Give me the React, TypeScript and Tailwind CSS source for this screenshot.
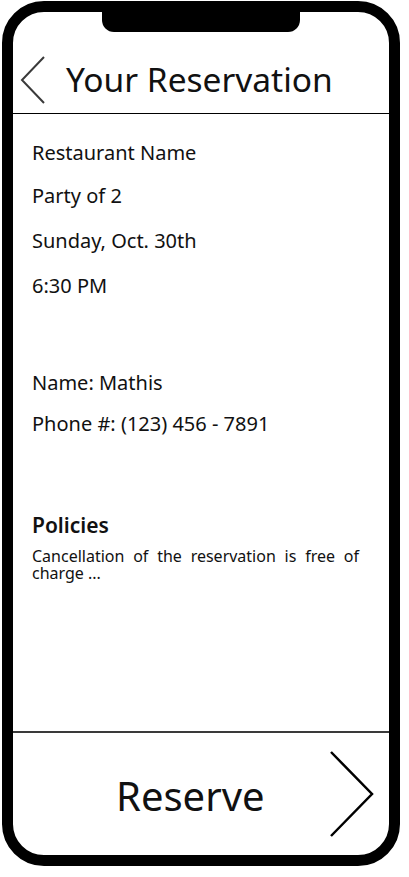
import React from 'react';

const font = { fontFamily: '"Noto Sans", "Open Sans", sans-serif' };

function BackChevron() {
  return (
    <svg width="25" height="48" viewBox="0 0 25 48" fill="none">
      <path d="M24 1 L2 24 L24 47" stroke="#3a3a3a" strokeWidth="2" />
    </svg>
  );
}

function NextChevron() {
  return (
    <svg width="44" height="86" viewBox="0 0 44 86" fill="none">
      <path d="M1 1 L42 43 L1 85" stroke="#000" strokeWidth="2.5" />
    </svg>
  );
}

export default function App() {
  return (
    <div className="min-h-screen bg-white text-[#111]" style={font}>
      <div className="relative ml-[2px] mt-[1px] w-[398px] h-[865px] border-[11px] border-black rounded-[42px] flex flex-col bg-white">
        {/* notch */}
        <div className="absolute top-[-11px] left-[89px] w-[198px] h-[31px] bg-black rounded-b-[12px]" />

        {/* header */}
        <div className="h-[102px] border-b border-black flex items-center pt-[34px] pl-[7px]">
          <BackChevron />
          <h1 className="ml-[21px] text-[33.5px] leading-none">Your Reservation</h1>
        </div>

        {/* details */}
        <div className="flex-1 px-[19px] pt-[25px] text-[20px] leading-[28px]">
          <p>Restaurant Name</p>
          <p className="mt-[15px]">Party of 2</p>
          <p className="mt-[17px]">Sunday, Oct. 30th</p>
          <p className="mt-[17px]">6:30 PM</p>

          <p className="mt-[69px]">Name: Mathis</p>
          <p className="mt-[13px]">Phone #: (123) 456 - 7891</p>

          <h2 className="mt-[72px] text-[21px] leading-[30px] font-semibold">Policies</h2>
          <p className="mt-[8px] pr-[11px] text-[16px] leading-[17px] text-justify">
            Cancellation of the reservation is free of charge ...
          </p>
        </div>

        {/* footer */}
        <div className="h-[124px] border-t-2 border-[#3a3a3a] flex items-center justify-between pl-[103px] pr-[15px]">
          <span className="mt-[4px] text-[40px]">Reserve</span>
          <NextChevron />
        </div>
      </div>
    </div>
  );
}
